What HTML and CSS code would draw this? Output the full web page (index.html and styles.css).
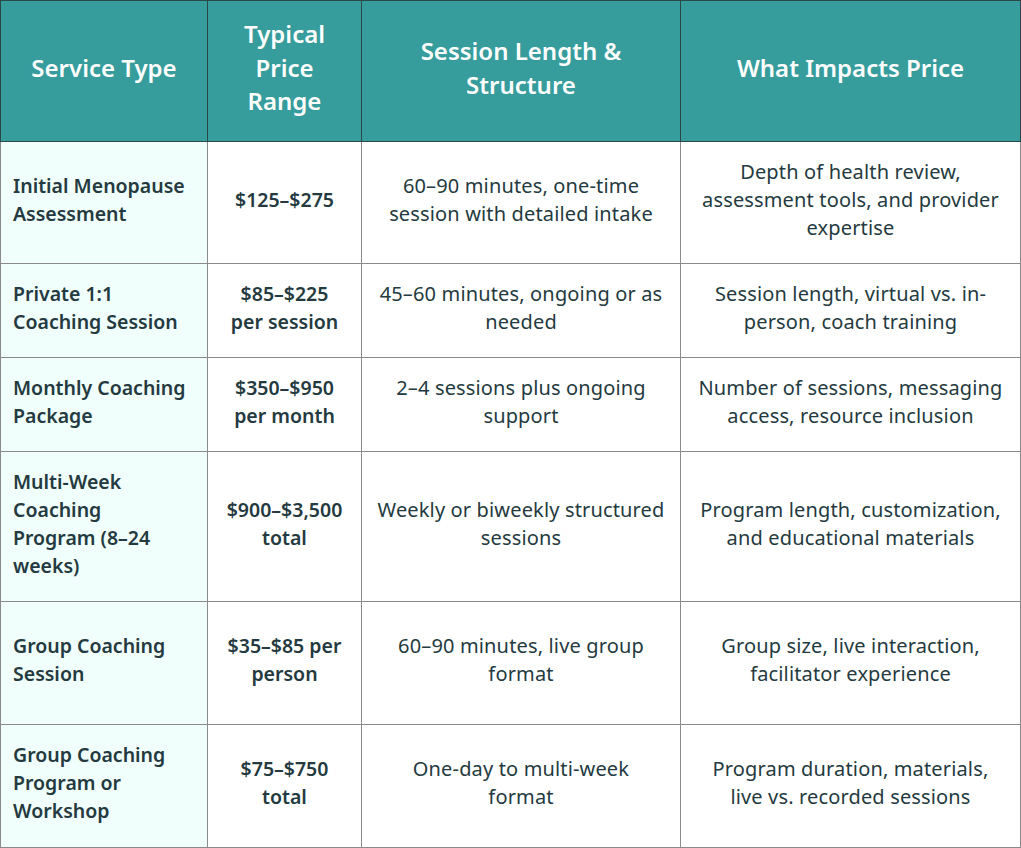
FILE: index.html
```html
<!DOCTYPE html>
<html>
<head>
<meta charset="utf-8">
<link rel="stylesheet" href="styles.css">
</head>
<body>
<table class="price-table">
  <colgroup>
    <col class="c1"><col class="c2"><col class="c3"><col class="c4">
  </colgroup>
  <thead>
    <tr class="r-head">
      <th>Service Type</th>
      <th>Typical<br>Price<br>Range</th>
      <th>Session Length &amp;<br>Structure</th>
      <th>What Impacts Price</th>
    </tr>
  </thead>
  <tbody>
    <tr class="r1">
      <td class="svc">Initial Menopause<br>Assessment</td>
      <td class="price">$125–$275</td>
      <td>60–90 minutes, one-time<br>session with detailed intake</td>
      <td>Depth of health review,<br>assessment tools, and provider<br>expertise</td>
    </tr>
    <tr class="r2">
      <td class="svc">Private 1:1<br>Coaching Session</td>
      <td class="price">$85–$225<br>per session</td>
      <td>45–60 minutes, ongoing or as<br>needed</td>
      <td>Session length, virtual vs. in-<br>person, coach training</td>
    </tr>
    <tr class="r3">
      <td class="svc">Monthly Coaching<br>Package</td>
      <td class="price">$350–$950<br>per month</td>
      <td>2–4 sessions plus ongoing<br>support</td>
      <td>Number of sessions, messaging<br>access, resource inclusion</td>
    </tr>
    <tr class="r4">
      <td class="svc">Multi-Week<br>Coaching<br>Program (8–24<br>weeks)</td>
      <td class="price">$900–$3,500<br>total</td>
      <td>Weekly or biweekly structured<br>sessions</td>
      <td>Program length, customization,<br>and educational materials</td>
    </tr>
    <tr class="r5">
      <td class="svc">Group Coaching<br>Session</td>
      <td class="price">$35–$85 per<br>person</td>
      <td>60–90 minutes, live group<br>format</td>
      <td>Group size, live interaction,<br>facilitator experience</td>
    </tr>
    <tr class="r6">
      <td class="svc">Group Coaching<br>Program or<br>Workshop</td>
      <td class="price">$75–$750<br>total</td>
      <td>One-day to multi-week<br>format</td>
      <td>Program duration, materials,<br>live vs. recorded sessions</td>
    </tr>
  </tbody>
</table>
</body>
</html>
```

FILE: styles.css
```css
html, body {
  margin: 0;
  padding: 0;
  background: #ffffff;
}
.price-table {
  width: 1020px;
  border-collapse: collapse;
  table-layout: fixed;
  font-family: "Noto Sans", "Open Sans", sans-serif;
  color: #243a40;
}
.c1 { width: 207px; }
.c2 { width: 154px; }
.c3 { width: 319px; }
.c4 { width: 340px; }
.price-table th,
.price-table td {
  border: 1px solid #8a8a8a;
  text-align: center;
  vertical-align: middle;
  padding: 0 4px 6px;
  white-space: nowrap;
}
.price-table th {
  background: #369c9c;
  color: #ffffff;
  font-size: 24px;
  font-weight: 600;
  line-height: 33.5px;
  border-color: #2b4848;
  padding-bottom: 7px;
}
.price-table td {
  font-size: 20px;
  font-weight: 400;
  line-height: 28px;
  letter-spacing: 0.15px;
}
.price-table td.svc {
  background: #f0fffc;
  text-align: left;
  padding-left: 12px;
  font-size: 19.5px;
  font-weight: 600;
  letter-spacing: 0;
}
.price-table td.price {
  font-size: 19.5px;
  font-weight: 600;
  letter-spacing: 0;
}
.r-head { height: 141px; }
.r1 { height: 122px; }
.r2 { height: 94px; }
.r3 { height: 94px; }
.r4 { height: 150px; }
.r5 { height: 123px; }
.r6 { height: 123px; }
```
